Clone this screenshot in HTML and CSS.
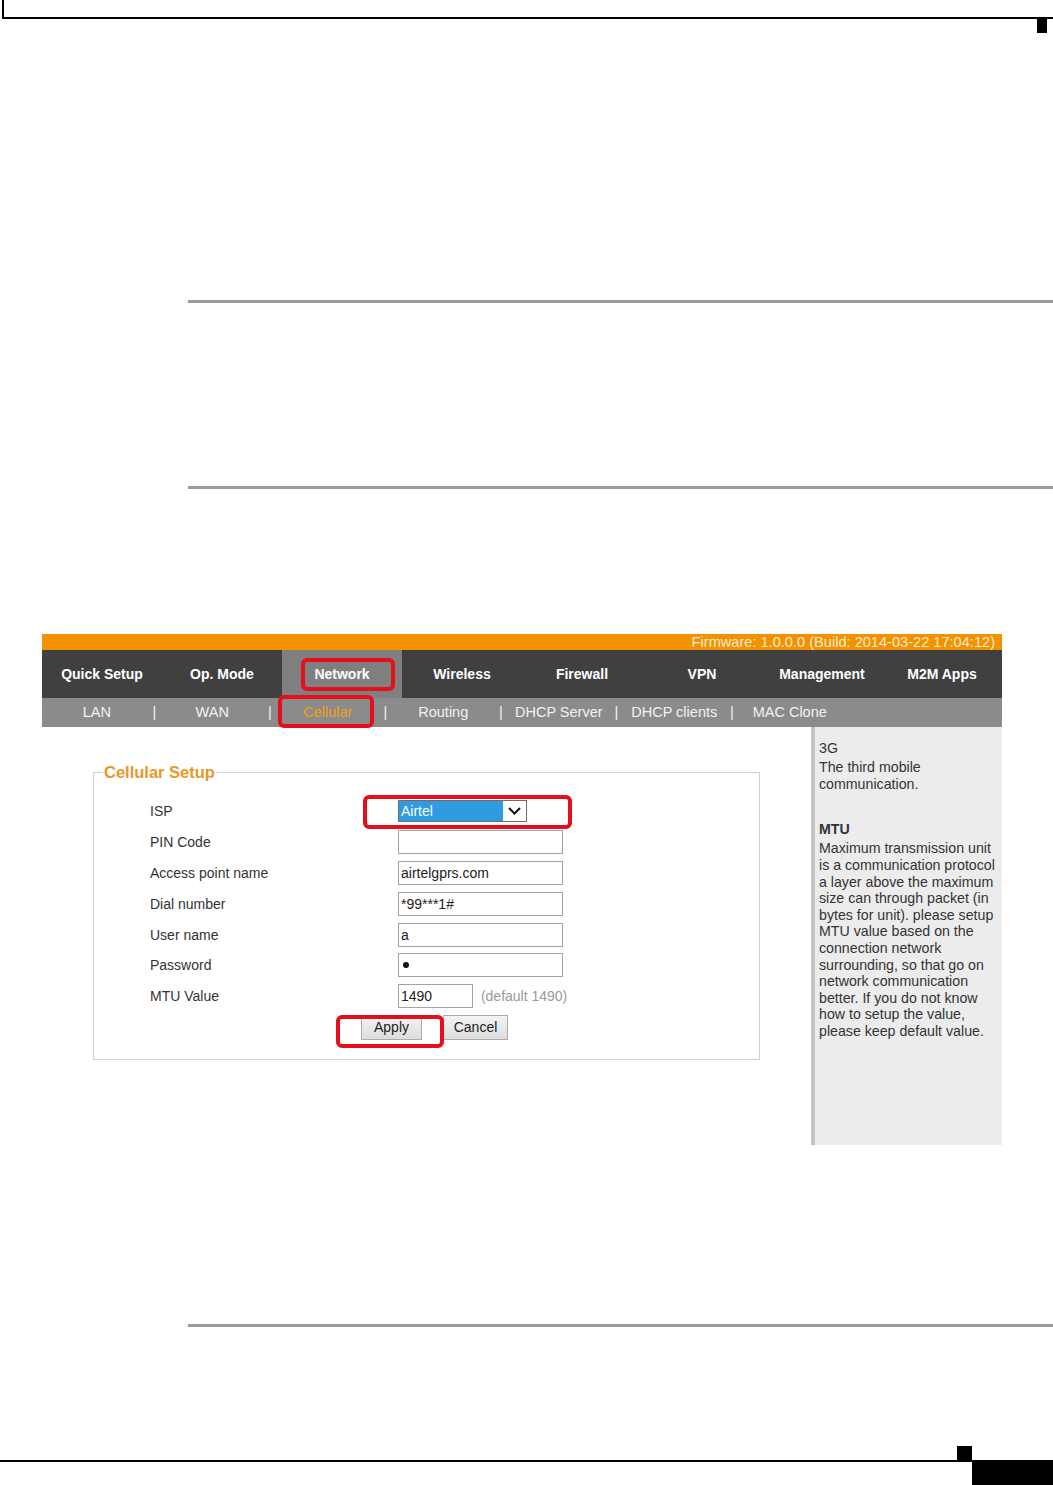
FILE: index.html
```html
<!DOCTYPE html>
<html>
<head>
<meta charset="utf-8">
<link rel="stylesheet" href="styles.css">
</head>
<body>
<div class="doc-head"></div>
<div class="head-mark"></div>

<div class="rule rule-1"></div>
<div class="rule rule-2"></div>

<div class="shot">
	<div class="fw-bar">Firmware: 1.0.0.0 (Build: 2014-03-22 17:04:12)</div>

	<div class="nav">
		<span class="nav-item">Quick Setup</span>
		<span class="nav-item">Op. Mode</span>
		<span class="nav-item active">Network</span>
		<span class="nav-item">Wireless</span>
		<span class="nav-item">Firewall</span>
		<span class="nav-item">VPN</span>
		<span class="nav-item">Management</span>
		<span class="nav-item">M2M Apps</span>
	</div>

	<div class="subnav">
		<span class="sub-item">LAN</span><span class="sub-sep">|</span>
		<span class="sub-item">WAN</span><span class="sub-sep">|</span>
		<span class="sub-item current">Cellular</span><span class="sub-sep">|</span>
		<span class="sub-item">Routing</span><span class="sub-sep">|</span>
		<span class="sub-item">DHCP Server</span><span class="sub-sep">|</span>
		<span class="sub-item">DHCP clients</span><span class="sub-sep">|</span>
		<span class="sub-item">MAC Clone</span>
	</div>

	<div class="shot-body">
		<div class="main">
			<fieldset class="setup">
				<legend>Cellular Setup</legend>
				<div class="form-grid">
					<div class="row">
						<span>ISP</span>
						<div class="select">
							<span class="sel-val">Airtel</span>
							<span class="sel-arrow"><svg width="13" height="8" viewBox="0 0 13 8"><polyline points="1,1 6.5,6.5 12,1" fill="none" stroke="#111" stroke-width="2"/></svg></span>
						</div>
					</div>
					<div class="row">
						<span>PIN Code</span>
						<input class="field" type="text" value="" readonly>
					</div>
					<div class="row">
						<span>Access point name</span>
						<input class="field" type="text" value="airtelgprs.com" readonly>
					</div>
					<div class="row">
						<span>Dial number</span>
						<input class="field" type="text" value="*99***1#" readonly>
					</div>
					<div class="row">
						<span>User name</span>
						<input class="field" type="text" value="a" readonly>
					</div>
					<div class="row">
						<span>Password</span>
						<div class="field pass"><span class="dot"></span></div>
					</div>
					<div class="row">
						<span>MTU Value</span>
						<div>
							<input class="field mtu" type="text" value="1490" readonly>
							<span class="hint">(default 1490)</span>
						</div>
					</div>
					<div class="actions">
						<button class="btn apply">Apply</button>
						<button class="btn cancel">Cancel</button>
					</div>
				</div>
			</fieldset>
		</div>

		<div class="aside">
			<div class="help-title">3G</div>
			<p>The third mobile communication.</p>
			<div class="help-title mtu-title">MTU</div>
			<p>Maximum transmission unit is a communication protocol a layer above the maximum size can through packet (in bytes for unit). please setup MTU value based on the connection network surrounding, so that go on network communication better. If you do not know how to setup the value, please keep default value.</p>
		</div>
	</div>

	<!-- red annotation boxes -->
	<div class="mark mark-network"></div>
	<div class="mark mark-cellular"></div>
	<div class="mark mark-isp"></div>
	<div class="mark mark-apply"></div>
</div>

<div class="rule rule-3"></div>

<div class="doc-foot">
	<div class="foot-left"><span class="foot-mark"></span></div>
	<div class="foot-tab"></div>
</div>
</body>
</html>
```

FILE: styles.css
```css
body {
	margin: 0;
	background: #fff;
	font-family: Arial, "Liberation Sans", Helvetica, sans-serif;
	color: #333;
	font-size: 14px;
}

/* page frame */
.doc-head {
	height: 17px;
	margin-left: 2px;
	border-left: 2px solid #000;
	border-bottom: 2px solid #000;
}
.head-mark {
	width: 10px;
	height: 14px;
	margin-left: 1037px;
	background: #000;
}

.rule {
	margin-left: 188px;
	height: 3px;
	background: #9a9a9a;
}
.rule-1 { margin-top: 267px; }
.rule-2 { margin-top: 183px; }
.rule-3 { margin-top: 179px; }

.doc-foot {
	margin-top: 119px;
	display: flex;
	align-items: flex-start;
}
.foot-left {
	width: 972px;
	height: 14px;
	border-bottom: 2px solid #000;
	display: flex;
	justify-content: flex-end;
}
.foot-mark {
	width: 15px;
	height: 14px;
	background: #000;
}
.foot-tab {
	flex: 1;
	margin-top: 14px;
	height: 25px;
	background: #000;
}

/* router screenshot */
.shot {
	position: relative;
	margin: 145px 0 0 42px;
	width: 960px;
}

.fw-bar {
	height: 16px;
	line-height: 16px;
	background: #f39200;
	color: #fdebd0;
	text-align: right;
	padding-right: 7px;
	font-size: 14.6px;
}

.nav {
	display: flex;
	height: 48px;
	background: #404040;
}
.nav-item {
	width: 120px;
	display: flex;
	align-items: center;
	justify-content: center;
	color: #fff;
	font-weight: bold;
	font-size: 14px;
}
.nav-item.active {
	background: #7f7f7f;
}

.subnav {
	display: flex;
	height: 29px;
	line-height: 29px;
	background: #8b8b8b;
	color: #f2f2f2;
	font-size: 14.5px;
}
.sub-item {
	width: 109.5px;
	text-align: center;
}
.sub-sep {
	width: 6px;
	text-align: center;
}
.sub-item.current {
	color: #f0a010;
}

.shot-body {
	display: flex;
	height: 418px;
}
.main {
	width: 769px;
	background: #fff;
}

.setup {
	margin: 36px 0 0 51px;
	width: 667px;
	box-sizing: border-box;
	border: 1px solid #d0d0d0;
	padding: 0;
}
.setup legend {
	margin-left: 9px;
	padding: 0 1px;
	line-height: 18px;
	font-size: 16.5px;
	font-weight: bold;
	color: #e8982a;
}

.form-grid {
	padding: 15px 0 19px 56px;
}
.row {
	display: grid;
	grid-template-columns: 248px auto;
	align-items: center;
	height: 30.8px;
}

.select {
	display: flex;
	width: 129px;
	height: 22px;
	box-sizing: border-box;
	border: 1px solid #6d6d6d;
	background: #fff;
}
.sel-val {
	flex: 1;
	background: #2f9be0;
	color: #fff;
	line-height: 20px;
	padding-left: 2px;
}
.sel-arrow {
	width: 23px;
	display: flex;
	align-items: center;
	justify-content: center;
}

.field {
	width: 165px;
	height: 24px;
	box-sizing: border-box;
	border: 1px solid #a3a3a3;
	padding: 0 2px;
	margin: 0;
	font-family: inherit;
	font-size: 14px;
	color: #222;
	background: #fff;
	outline: none;
}
.pass {
	display: flex;
	align-items: center;
	padding-left: 4px;
}
.dot {
	width: 6px;
	height: 6px;
	border-radius: 50%;
	background: #111;
}
.mtu {
	width: 75px;
	vertical-align: middle;
}
.hint {
	color: #9a9a9a;
	margin-left: 4px;
	vertical-align: middle;
}

.actions {
	display: flex;
	gap: 21px;
	margin-top: 3px;
	padding-left: 211px;
}
.btn {
	height: 25px;
	border: 1px solid #acacac;
	background: linear-gradient(#f4f4f4, #dddddd);
	font-family: inherit;
	font-size: 14px;
	color: #222;
	padding: 0;
}
.apply { width: 61px; }
.cancel { width: 65px; }

.aside {
	flex: 1;
	background: #ececec;
	border-left: 4px solid #c3c3c3;
	padding: 13px 1px 0 4px;
	line-height: 16.6px;
	font-size: 14.2px;
	color: #333;
}
.aside p {
	margin: 0;
}
.help-title {
	margin-bottom: 2.5px;
}
.mtu-title {
	margin-top: 29px;
	font-weight: bold;
}

.mark {
	position: absolute;
	border: 4px solid #e3101c;
	border-radius: 6px;
	box-sizing: border-box;
}
.mark-network { left: 259px; top: 24px; width: 94px; height: 33px; }
.mark-cellular { left: 236px; top: 61px; width: 96px; height: 33px; }
.mark-isp { left: 321px; top: 161px; width: 209px; height: 34px; }
.mark-apply { left: 294px; top: 381px; width: 108px; height: 33px; }
```
